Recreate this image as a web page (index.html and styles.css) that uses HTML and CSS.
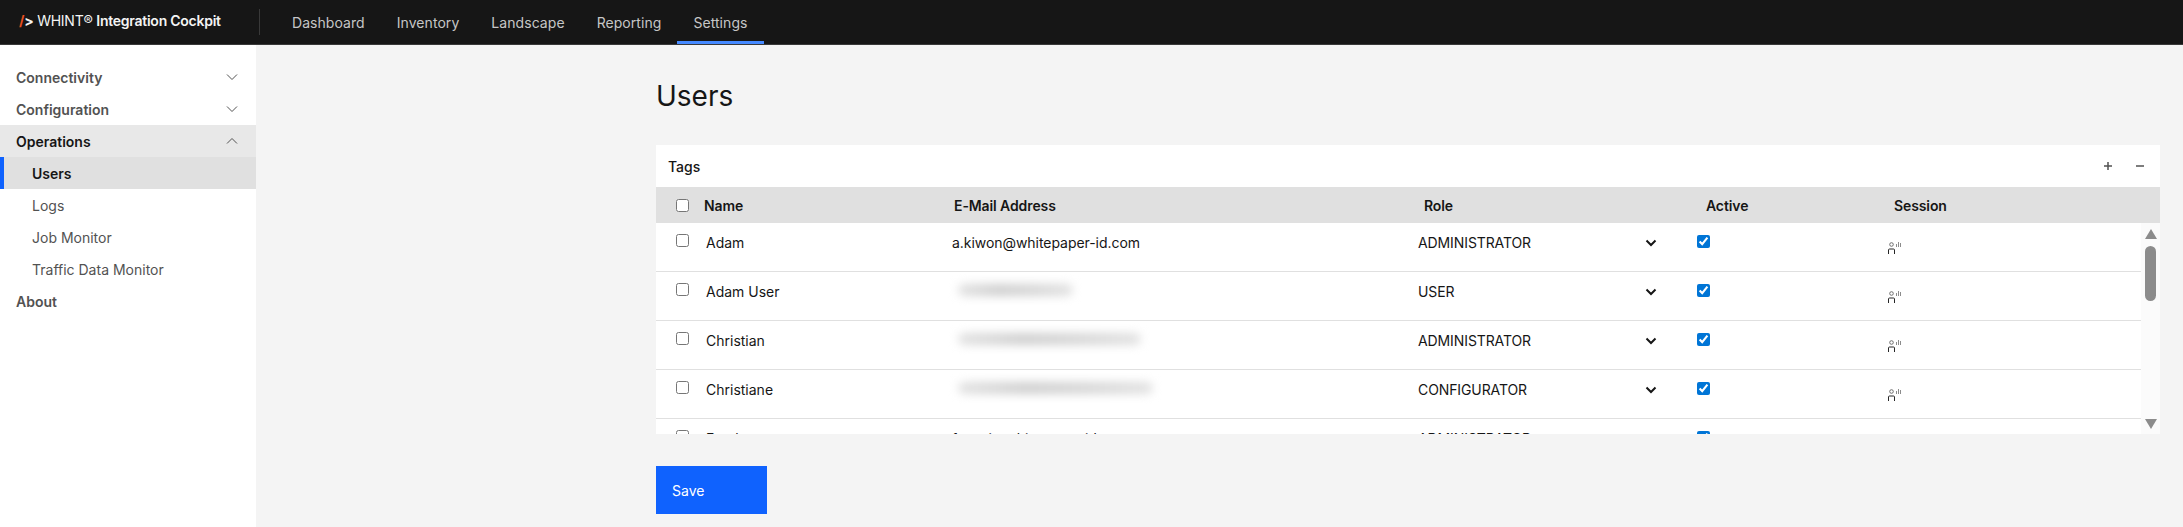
FILE: index.html
```html
<!DOCTYPE html>
<html lang="en">
<head>
  <meta charset="UTF-8">
  <meta name="viewport" content="width=device-width, initial-scale=1.0">
  <title>Users</title>
  <link rel="stylesheet" href="styles.css">
</head>
<body>

  <header class="topbar">
    <div class="brand"><span class="brand-mark"><i>/</i>&gt;</span> WHINT® <strong>Integration Cockpit</strong></div>
    <nav class="topnav">
      <a class="topnav-item">Dashboard</a>
      <a class="topnav-item">Inventory</a>
      <a class="topnav-item">Landscape</a>
      <a class="topnav-item">Reporting</a>
      <a class="topnav-item current">Settings</a>
    </nav>
  </header>

  <div class="layout">
    <aside class="sidebar">
      <div class="menu-head">Connectivity
        <svg class="chev" viewBox="0 0 12 8"><path d="M1 1.5l5 5 5-5"/></svg>
      </div>
      <div class="menu-head">Configuration
        <svg class="chev" viewBox="0 0 12 8"><path d="M1 1.5l5 5 5-5"/></svg>
      </div>
      <div class="menu-head open">Operations
        <svg class="chev" viewBox="0 0 12 8"><path d="M1 6.5l5-5 5 5"/></svg>
      </div>
      <div class="menu-sub current">Users</div>
      <div class="menu-sub">Logs</div>
      <div class="menu-sub">Job Monitor</div>
      <div class="menu-sub">Traffic Data Monitor</div>
      <div class="menu-head">About</div>
    </aside>

    <main class="content">
      <h1 class="page-title">Users</h1>

      <section class="panel">
        <div class="panel-top">
          <span class="panel-label">Tags</span>
          <span class="panel-tools">
            <svg class="tool" viewBox="0 0 10 10"><path d="M5 1v8M1 5h8"/></svg>
            <svg class="tool" viewBox="0 0 10 10"><path d="M1 5h8"/></svg>
          </span>
        </div>

        <div class="row-grid table-head">
          <span class="cell-check"><input type="checkbox"></span>
          <span class="head-name">Name</span>
          <span class="head-mail">E-Mail Address</span>
          <span class="head-role">Role</span>
          <span class="head-active">Active</span>
          <span class="head-session">Session</span>
        </div>

        <div class="table-body">
          <div class="rows">
            <div class="row-grid user-row">
              <span class="cell-check"><input type="checkbox"></span>
              <span class="cell-name">Adam</span>
              <span class="cell-mail">a.kiwon@whitepaper-id.com</span>
              <span class="cell-role">ADMINISTRATOR <svg class="select-chev" viewBox="0 0 12 8"><path d="M1.5 1.5l4.5 4.5 4.500-4.500"/></svg></span>
              <span class="cell-active"><input type="checkbox" checked></span>
              <span class="cell-session"><svg class="session-icon" viewBox="0 0 15 12"><circle class="session-head" cx="4.500" cy="2.500" r="1.800"/><path d="M1.500 12V8q0-1 1-1h4q1 0 1 1v4"/><path class="session-bars" d="M9.500 2v3M11.500 0v5M13.500 1v4"/></svg></span>
            </div>
            <div class="row-grid user-row">
              <span class="cell-check"><input type="checkbox"></span>
              <span class="cell-name">Adam User</span>
              <span class="cell-mail"><span class="smudge smudge-short"></span></span>
              <span class="cell-role">USER <svg class="select-chev" viewBox="0 0 12 8"><path d="M1.5 1.5l4.5 4.5 4.500-4.500"/></svg></span>
              <span class="cell-active"><input type="checkbox" checked></span>
              <span class="cell-session"><svg class="session-icon" viewBox="0 0 15 12"><circle class="session-head" cx="4.500" cy="2.500" r="1.800"/><path d="M1.500 12V8q0-1 1-1h4q1 0 1 1v4"/><path class="session-bars" d="M9.500 2v3M11.500 0v5M13.500 1v4"/></svg></span>
            </div>
            <div class="row-grid user-row">
              <span class="cell-check"><input type="checkbox"></span>
              <span class="cell-name">Christian</span>
              <span class="cell-mail"><span class="smudge smudge-mid"></span></span>
              <span class="cell-role">ADMINISTRATOR <svg class="select-chev" viewBox="0 0 12 8"><path d="M1.5 1.5l4.5 4.5 4.500-4.500"/></svg></span>
              <span class="cell-active"><input type="checkbox" checked></span>
              <span class="cell-session"><svg class="session-icon" viewBox="0 0 15 12"><circle class="session-head" cx="4.500" cy="2.500" r="1.800"/><path d="M1.500 12V8q0-1 1-1h4q1 0 1 1v4"/><path class="session-bars" d="M9.500 2v3M11.500 0v5M13.500 1v4"/></svg></span>
            </div>
            <div class="row-grid user-row">
              <span class="cell-check"><input type="checkbox"></span>
              <span class="cell-name">Christiane</span>
              <span class="cell-mail"><span class="smudge smudge-long"></span></span>
              <span class="cell-role">CONFIGURATOR <svg class="select-chev" viewBox="0 0 12 8"><path d="M1.5 1.5l4.5 4.5 4.500-4.500"/></svg></span>
              <span class="cell-active"><input type="checkbox" checked></span>
              <span class="cell-session"><svg class="session-icon" viewBox="0 0 15 12"><circle class="session-head" cx="4.500" cy="2.500" r="1.800"/><path d="M1.500 12V8q0-1 1-1h4q1 0 1 1v4"/><path class="session-bars" d="M9.500 2v3M11.500 0v5M13.500 1v4"/></svg></span>
            </div>
            <div class="row-grid user-row">
              <span class="cell-check"><input type="checkbox"></span>
              <span class="cell-name">Frank</span>
              <span class="cell-mail">f.mani@whitepaper-id.com</span>
              <span class="cell-role">ADMINISTRATOR <svg class="select-chev" viewBox="0 0 12 8"><path d="M1.5 1.5l4.5 4.5 4.500-4.500"/></svg></span>
              <span class="cell-active"><input type="checkbox" checked></span>
              <span class="cell-session"></span>
            </div>
          </div>
          <div class="scroll-track">
            <span class="arrow-up"></span>
            <span class="scroll-thumb"></span>
            <span class="arrow-down"></span>
          </div>
        </div>
      </section>

      <button class="save-btn">Save</button>
    </main>
  </div>

</body>
</html>
```

FILE: styles.css
```css
* {
  box-sizing: border-box;
}

html, body {
  height: 100%;
}

body {
  margin: 0;
  font-family: "Inter", "Noto Sans", sans-serif;
  font-size: 14px;
  color: #161616;
  background: #f4f4f4;
  overflow: hidden;
}

.topbar {
  display: flex;
  height: 45px;
  background: #161616;
  border-bottom: 1px solid #393939;
}

.brand {
  width: 260px;
  padding: 0 0 0 19px;
  margin: 9px 0;
  line-height: 24px;
  color: #f4f4f4;
  letter-spacing: -0.25px;
  border-right: 1px solid #393939;
  white-space: nowrap;
}

.brand strong {
  font-weight: 600;
}

.brand-mark {
  font-weight: 700;
}

.brand-mark i {
  color: #e8501f;
  font-style: normal;
}

.topnav {
  display: flex;
  padding-left: 16px;
}

.topnav-item {
  display: flex;
  align-items: center;
  padding: 0 16px;
  height: 44px;
  color: #c6c6c6;
  letter-spacing: 0.06px;
}

.topnav-item.current {
  border-bottom: 3px solid #4589ff;
  padding-top: 3px;
}

.layout {
  display: flex;
  height: calc(100% - 45px);
}

.sidebar {
  width: 256px;
  padding-top: 16px;
  background: #fff;
  flex-shrink: 0;
}

.menu-head,
.menu-sub {
  display: flex;
  align-items: center;
  justify-content: space-between;
  height: 32px;
  font-weight: 600;
  color: #525252;
  padding: 0 18px 0 16px;
}

.menu-head.open {
  background: #e8e8e8;
  color: #161616;
}

.menu-sub {
  font-weight: 400;
  padding-left: 32px;
}

.menu-sub.current {
  background: #e0e0e0;
  color: #161616;
  font-weight: 600;
  border-left: 4px solid #0f62fe;
  padding-left: 28px;
}

.chev {
  width: 12px;
  height: 8px;
  fill: none;
  stroke: #525252;
  stroke-width: 1;
}

.content {
  flex: 1;
  padding: 0 23px 0 400px;
}

.page-title {
  margin: 0;
  padding-top: 33px;
  font-size: 28px;
  line-height: 36px;
  font-weight: 400;
}

.panel {
  margin-top: 31px;
  background: #fff;
}

.panel-top {
  display: flex;
  align-items: center;
  justify-content: space-between;
  height: 42px;
  padding: 0 15px 0 12px;
}

.panel-label {
  font-weight: 500;
}

.panel-tools {
  display: flex;
  gap: 22px;
}

.tool {
  width: 10px;
  height: 10px;
  fill: none;
  stroke: #525252;
  stroke-width: 1.5;
}

.row-grid {
  display: grid;
  grid-template-columns: 48px 248px 466px 279px 190px 1fr;
  align-items: center;
}

.table-head {
  height: 36px;
  background: #e0e0e0;
  font-weight: 600;
  letter-spacing: -0.1px;
}

.head-mail {
  padding-left: 2px;
}

.head-role {
  padding-left: 6px;
}

.head-active {
  padding-left: 9px;
}

.head-session {
  padding-left: 7px;
}

.cell-check {
  display: flex;
  padding-left: 20px;
}

input[type="checkbox"] {
  width: 13px;
  height: 13px;
  margin: 0;
  accent-color: #0075d6;
}

.table-body {
  display: flex;
  height: 211px;
  overflow: hidden;
}

.rows {
  flex: 1;
}

.user-row {
  height: 49px;
  align-items: start;
  padding-top: 11px;
  border-bottom: 1px solid #e0e0e0;
}

.cell-name {
  padding-left: 2px;
}

.cell-mail {
  letter-spacing: -0.05px;
}

.cell-role {
  display: flex;
  align-items: center;
  justify-content: space-between;
  padding: 0 40px 0 0;
  letter-spacing: -0.1px;
}

.select-chev {
  width: 12px;
  height: 8px;
  fill: none;
  stroke: #161616;
  stroke-width: 2;
}

.session-icon {
  display: block;
  width: 15px;
  height: 12px;
  margin-top: 8px;
  fill: none;
  stroke: #262626;
  stroke-width: 1;
}

.session-head {
  stroke: #6f6f6f;
}

.session-bars {
  stroke: #8c8c8c;
  shape-rendering: crispEdges;
}

.smudge {
  display: block;
  height: 12px;
  margin: 1px 0 0 6px;
  border-radius: 6px;
  background: linear-gradient(90deg, #e2e2e2, #cfcfcf 35%, #d6d6d6 65%, #e2e2e2);
  filter: blur(5px);
}

.smudge-short {
  width: 115px;
}

.smudge-mid {
  width: 183px;
}

.smudge-long {
  width: 195px;
}

.scroll-track {
  display: flex;
  flex-direction: column;
  align-items: center;
  width: 19px;
  padding-top: 6px;
  background: #fbfbfb;
}

.arrow-up,
.arrow-down {
  width: 0;
  height: 0;
  border-left: 6.5px solid transparent;
  border-right: 6.5px solid transparent;
}

.arrow-up {
  border-bottom: 10px solid #8c8c8c;
}

.arrow-down {
  margin-top: auto;
  margin-bottom: 5px;
  border-top: 10px solid #8c8c8c;
}

.scroll-thumb {
  width: 11px;
  height: 55px;
  margin-top: 7px;
  border-radius: 6px;
  background: #8c8c8c;
}

.save-btn {
  display: block;
  width: 111px;
  height: 48px;
  margin-top: 32px;
  padding: 0 16px;
  border: none;
  background: #0f62fe;
  color: #fff;
  font: inherit;
  text-align: left;
}
```
